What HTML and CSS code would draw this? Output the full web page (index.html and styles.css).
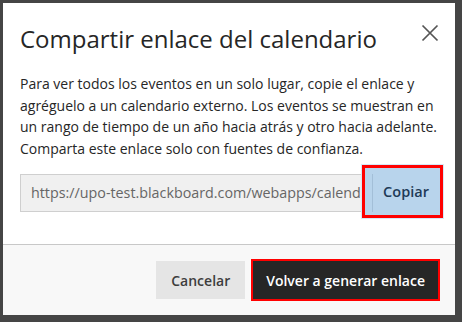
FILE: index.html
```html
<!DOCTYPE html>
<html lang="es">
<head>
    <meta charset="UTF-8">
    <title>Compartir enlace del calendario</title>
    <link rel="stylesheet" href="styles.css">
</head>
<body>
    <div class="dialog">
        <div class="dialog-header">
            <h1 class="dialog-title">Compartir enlace del calendario</h1>
            <button class="close-btn" aria-label="Cerrar">
                <svg width="18" height="18" viewBox="0 0 18 18">
                    <path d="M1.5 1.5 L16.5 16.5 M16.5 1.5 L1.5 16.5" stroke="#555" stroke-width="1.7" fill="none"/>
                </svg>
            </button>
        </div>
        <div class="dialog-body">
            <p class="info">Para ver todos los eventos en un solo lugar, copie el enlace y agréguelo a un calendario externo. Los eventos se muestran en un rango de tiempo de un año hacia atrás y otro hacia adelante. Comparta este enlace solo con fuentes de confianza.</p>
            <div class="link-row">
                <input class="link-input" type="text" readonly value="https://upo-test.blackboard.com/webapps/calendar/calendarFeed/abc/learn.ics">
                <button class="copy-btn">Copiar</button>
            </div>
        </div>
        <div class="dialog-footer">
            <button class="btn btn-cancel">Cancelar</button>
            <button class="btn btn-primary">Volver a generar enlace</button>
        </div>
    </div>
</body>
</html>
```
FILE: styles.css
```css
body {
    margin: 0;
    padding: 3px;
    background: #454545;
    font-family: 'Open Sans', sans-serif;
    height: 322px;
    box-sizing: border-box;
}
.dialog {
    width: 452px;
    height: 312px;
    background: #fff;
    display: flex;
    flex-direction: column;
}
.dialog-header {
    display: flex;
    align-items: flex-start;
    justify-content: space-between;
    padding: 20px 16px 0 17px;
}
.dialog-title {
    margin: 0;
    font-size: 24px;
    font-weight: 400;
    line-height: 32px;
    color: #262626;
}
.close-btn {
    background: none;
    border: none;
    padding: 0;
    margin-top: 1px;
    width: 18px;
    height: 18px;
    display: flex;
    cursor: pointer;
}
.dialog-body {
    flex: 1;
    padding: 18px 15px 0 17px;
}
.info {
    margin: 0;
    font-size: 14px;
    line-height: 21.7px;
    color: #262626;
}
.link-row {
    display: flex;
    margin-top: 14px;
}
.link-input {
    flex: 1;
    min-width: 0;
    height: 38px;
    box-sizing: border-box;
    border: 1px solid #cfcfcf;
    background: #f0f0f0;
    color: #666;
    font-family: 'Open Sans', sans-serif;
    font-size: 14.3px;
    padding: 0 10px;
    outline: none;
}
/* highlighted copy button, drawn over the end of the field */
.copy-btn {
    position: relative;
    align-self: flex-start;
    width: 81px;
    height: 53px;
    margin: -9px -3px -6px -10px;
    padding: 0 0 0 7px;
    box-sizing: border-box;
    background: #b8d4ec;
    border: 3px solid #f00;
    box-shadow: 0 0 0 1px #d6e8f7;
    color: #1e3a57;
    font-family: 'Open Sans', sans-serif;
    font-size: 14.5px;
    font-weight: 600;
    cursor: pointer;
}
.copy-btn::before {
    content: "";
    position: absolute;
    left: 7px;
    top: 6px;
    height: 38px;
    border-left: 1px solid #a3bfd8;
}
.dialog-footer {
    border-top: 1px solid #c8c8c8;
    background: #f8f8f8;
    height: 70px;
    display: flex;
    align-items: center;
    justify-content: flex-end;
    gap: 8px;
    padding: 0 17px;
}
.btn {
    height: 38px;
    border: none;
    font-family: 'Open Sans', sans-serif;
    font-size: 14px;
    font-weight: 600;
    cursor: pointer;
}
.btn-cancel {
    background: #e5e5e5;
    color: #3d3d3d;
    padding: 0 15px;
}
.btn-primary {
    background: #262626;
    color: #fff;
    padding: 0 13px;
    outline: 2px solid #f00;
    outline-offset: 0;
}
```
